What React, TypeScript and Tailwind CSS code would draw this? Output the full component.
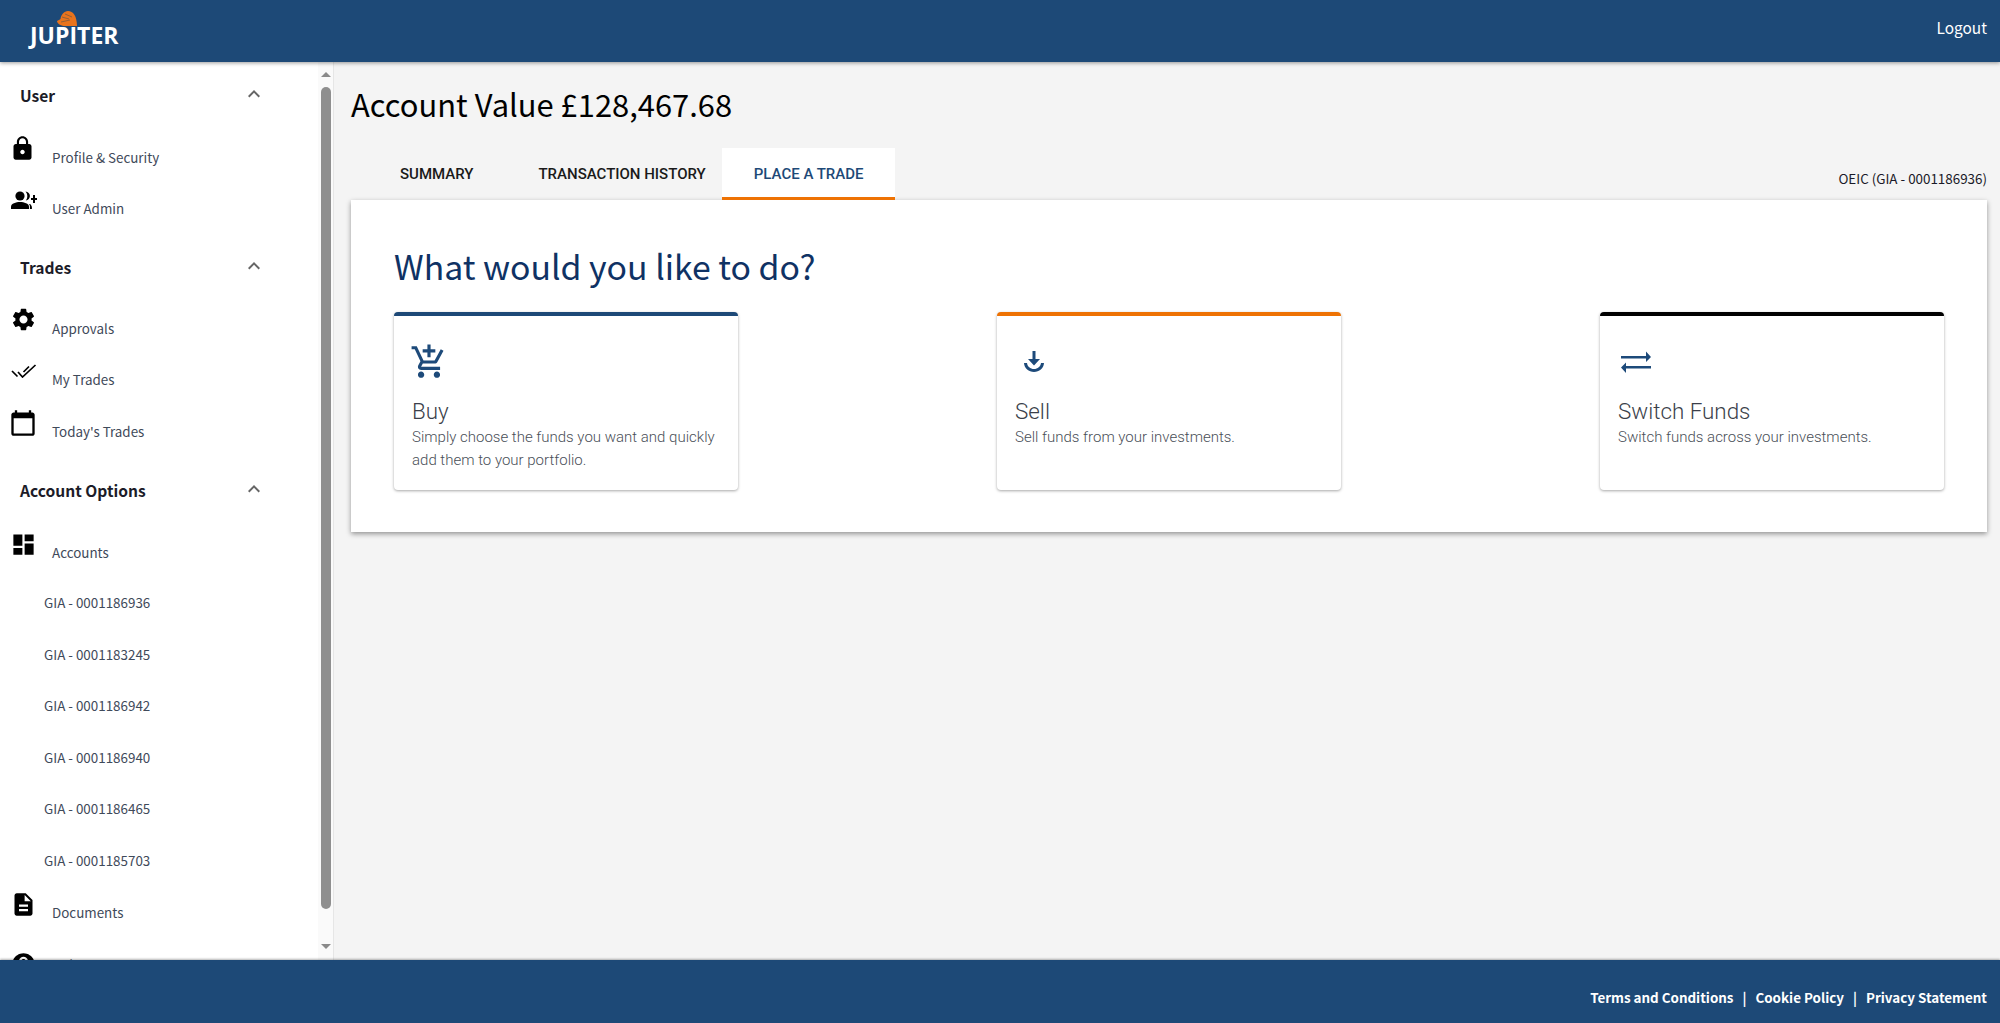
import React from "react";
import { MdLock, MdSettings, MdDashboard, MdDescription, MdHelp, MdKeyboardArrowUp, MdOutlineAddShoppingCart, MdCalendarToday } from "react-icons/md";

const source = "[font-family:'Noto_Sans_CJK_SC','Noto_Sans',sans-serif]";

function PersonAdd() {
  return (
    <svg viewBox="0 0 26 20" className="w-[26px] h-[20px]" fill="currentColor">
      <circle cx="9" cy="6" r="4.6" />
      <path d="M0 19v-2.6C0 13.6 5 12 9 12s9 1.600 9 4.400V19z" />
      <path d="M14.500 1.600c2.600.3 4.400 2.200 4.400 4.500s-1.700 4.100-4.100 4.500c1-1.200 1.500-2.800 1.500-4.500s-.7-3.300-1.800-4.500z" />
      <path d="M19 14c1.300 1 1.900 2.200 1.900 3.500V19h-2v-2c0-1-.0-2-.9-3z" />
      <path d="M22 5h2v3h2v2h-2v3h-2v-3h-2V8h2z" />
    </svg>
  );
}

function DoubleCheck() {
  return (
    <svg viewBox="0 0 26 14" className="w-[26px] h-[14px]" fill="none" stroke="currentColor" strokeWidth="1.700">
      <path d="M1 7l5.500 5.500M7 8l4.500 5L24.500 1M12.500 8L18 2.500" />
    </svg>
  );
}

function SellIcon() {
  return (
    <svg viewBox="0 0 24 24" className="w-[24px] h-[28px]" fill="#1d4a7a">
      <path d="M10.500 1h3v8h4.500L12 15.500 6 9h4.500z" />
      <path d="M2 13h3c.4 3.600 3.300 6 7 6s6.600-2.400 7-6h3c-.4 5.400-4.700 9-10 9S2.400 18.400 2 13z" />
    </svg>
  );
}

function SwitchIcon() {
  return (
    <svg viewBox="0 0 32 24" className="w-[32px] h-[24px]" fill="#1d4a7a">
      <path d="M1 6h25V1.500l5 5.500-5 5V8.500H1z" />
      <path d="M31 16H6v-3.500L1 17.500l5 5.500v-4.500h25z" />
    </svg>
  );
}

function SectionHeader({ label, tail = "" }: { label: string; tail?: string }) {
  return (
    <div className={`h-[68px] flex items-center justify-between pl-[20px] pr-[55px] shrink-0 ${tail}`}>
      <span className={`${source} text-[15.6px] font-bold text-[#1c1c28] leading-none`}>{label}</span>
      <MdKeyboardArrowUp className="w-[24px] h-[24px] text-[#666] -mt-[4px] mr-[-3px]" />
    </div>
  );
}

function NavItem({ icon, label, textShift = "mt-[3px]", iconShift = "-mt-[14px]" }: { icon: React.ReactNode; label: string; textShift?: string; iconShift?: string }) {
  return (
    <div className="h-[51.5px] flex items-center shrink-0">
      <div className={`w-[52px] pl-[11px] h-[28px] flex items-center text-black shrink-0 ${iconShift}`}>{icon}</div>
      <span className={`${source} text-[13.4px] text-[#3f4a5a] leading-none ${textShift}`}>{label}</span>
    </div>
  );
}

function SubItem({ label }: { label: string }) {
  return (
    <div className="h-[51.5px] flex items-center pl-[44px] shrink-0">
      <span className={`${source} text-[13.4px] text-[#3f4a5a] leading-none`}>{label}</span>
    </div>
  );
}

function Scrollbar() {
  return (
    <div className="w-[16px] bg-[#fafafa] border-r border-[#e6e6e6] flex flex-col items-center shrink-0">
      <div className="h-[25px] flex items-center justify-center shrink-0">
        <div className="w-0 h-0 border-x-[5px] border-x-transparent border-b-[5px] border-b-[#8a8a8a]" />
      </div>
      <div className="w-[10px] flex-1 bg-[#8f8f8f] rounded-full" />
      <div className="h-[51px] flex items-start pt-[35px] justify-center shrink-0">
        <div className="w-0 h-0 border-x-[5px] border-x-transparent border-t-[5px] border-t-[#8a8a8a]" />
      </div>
    </div>
  );
}

function Sidebar() {
  return (
    <aside className="w-[334px] h-full flex bg-white shrink-0 overflow-hidden">
      <div className="flex-1 min-w-0 h-full overflow-hidden flex flex-col">
        <SectionHeader label="User" />
        <NavItem icon={<MdLock className="w-[27px] h-[27px] -ml-[2px]" />} label="Profile & Security" />
        <NavItem icon={<PersonAdd />} label="User Admin" />
        <SectionHeader label="Trades" tail="mt-[1px] -mb-[1px]" />
        <NavItem icon={<MdSettings className="w-[27px] h-[27px] -ml-[1px]" />} label="Approvals" />
        <NavItem icon={<DoubleCheck />} label="My Trades" />
        <NavItem icon={<MdCalendarToday className="w-[28px] h-[28px] -ml-[2px]" />} label="Today's Trades" />
        <SectionHeader label="Account Options" tail="mt-[1px] mb-[1px]" />
        <NavItem icon={<MdDashboard className="w-[27px] h-[27px] -ml-[1px]" />} label="Accounts" />
        <SubItem label="GIA - 0001186936" />
        <SubItem label="GIA - 0001183245" />
        <SubItem label="GIA - 0001186942" />
        <SubItem label="GIA - 0001186940" />
        <SubItem label="GIA - 0001186465" />
        <SubItem label="GIA - 0001185703" />
        <NavItem icon={<MdDescription className="w-[27px] h-[27px] -ml-[1px]" />} label="Documents" textShift="mt-[2px]" />
        <NavItem icon={<MdHelp className="w-[27px] h-[27px] -ml-[1px]" />} label="Help Centre" iconShift="mt-[2px]" />
      </div>
      <Scrollbar />
    </aside>
  );
}

function TradeCard({ color, icon, title, text }: { color: string; icon: React.ReactNode; title: string; text: React.ReactNode }) {
  return (
    <div className={`w-[344px] h-[178px] bg-white rounded-[4px] border-t-4 ${color} shadow-[0_1px_3px_rgba(0,0,0,0.35)] px-[18px] pt-[28px] font-['Roboto',sans-serif]`}>
      <div className="h-[36px] flex items-center">{icon}</div>
      <div className="text-[22.4px] font-light text-[#3b3f4a] leading-[26px] mt-[18px]">{title}</div>
      <div className="text-[15px] font-light text-[#4a4f58] leading-[23px] mt-[2px]">{text}</div>
    </div>
  );
}

export default function App() {
  return (
    <div className="w-full h-screen flex flex-col overflow-hidden bg-[#f4f4f4]">
      <header className="h-[62px] bg-[#1d4977] shadow-[0_1px_4px_rgba(0,0,0,0.4)] flex items-start justify-between pr-[13px] shrink-0 relative z-10">
        <div className="relative pl-[30px] pt-[22px] w-[140px]">
          <svg viewBox="0 0 22 17" className="absolute left-[56px] top-[10px] w-[22px] h-[17px]">
            <path d="M1 11c1-1 3-1 3.500-2C5 5 8 1 12 1c5 0 9 5 9 15H9c-3 0-8-2-8-5z" fill="#e8731c" />
            <path d="M6 7l7 2M9 4l7 3M5 12l9-2" stroke="#7a5a40" strokeWidth="0.800" fill="none" />
          </svg>
          <span className="font-['Open_Sans',sans-serif] text-[23px] font-bold text-white leading-[26px]">JUPITER</span>
        </div>
        <span className={`${source} text-[15.4px] text-white leading-none mt-[20px]`}>Logout</span>
      </header>

      <div className="flex-1 min-h-0 flex">
        <Sidebar />
        <main className="flex-1 min-w-0 pl-[17px] pr-[13px] overflow-hidden">
          <h1 className={`${source} text-[30.9px] font-normal text-black leading-[40px] mt-[22px]`}>Account Value £128,467.68</h1>
          <div className="flex items-end justify-between mt-[24px] h-[52px]">
            <div className="flex pl-[17px] h-full font-['Roboto',sans-serif] text-[15px] font-medium">
              <div className="px-[32px] flex items-center pt-[1px] text-[#1a1a1a]">SUMMARY</div>
              <div className="pl-[33px] pr-[16px] flex items-center pt-[1px] text-[#1a1a1a]">TRANSACTION HISTORY</div>
              <div className="pl-[32px] pr-[31px] flex items-center pt-[4px] bg-white border-b-[3px] border-[#ee7203] text-[#1d4977]">PLACE A TRADE</div>
            </div>
            <span className={`${source} text-[13.4px] text-[#1a1a28] leading-none mb-[15px]`}>OEIC (GIA - 0001186936)</span>
          </div>
          <section className="bg-white h-[332px] px-[43px] pt-[44px] shadow-[0_2px_5px_rgba(0,0,0,0.4)]">
            <h2 className={`${source} text-[33.8px] font-normal text-[#0f3264] leading-[44px]`}>What would you like to do?</h2>
            <div className="flex justify-between mt-[24px]">
              <TradeCard
                color="border-[#1d4977]"
                icon={<MdOutlineAddShoppingCart className="w-[38px] h-[38px] text-[#1d4a7a] -ml-[2px]" />}
                title="Buy"
                text={<>Simply choose the funds you want and quickly<br />add them to your portfolio.</>}
              />
              <TradeCard
                color="border-[#ee7203]"
                icon={<div className="pl-[7px]"><SellIcon /></div>}
                title="Sell"
                text="Sell funds from your investments."
              />
              <TradeCard
                color="border-black"
                icon={<div className="pl-[2px]"><SwitchIcon /></div>}
                title="Switch Funds"
                text="Switch funds across your investments."
              />
            </div>
          </section>
        </main>
      </div>

      <footer className="h-[63px] bg-[#1d4977] shadow-[0_-1px_2px_rgba(0,0,0,0.3)] flex items-center justify-end gap-[9px] pr-[13px] pt-[12px] shrink-0 relative z-10">
        <span className={`${source} text-[13.4px] font-bold text-white leading-none`}>Terms and Conditions</span>
        <span className={`${source} text-[13.4px] font-bold text-white leading-none`}>|</span>
        <span className={`${source} text-[13.4px] font-bold text-white leading-none`}>Cookie Policy</span>
        <span className={`${source} text-[13.4px] font-bold text-white leading-none`}>|</span>
        <span className={`${source} text-[13.4px] font-bold text-white leading-none`}>Privacy Statement</span>
      </footer>
    </div>
  );
}
